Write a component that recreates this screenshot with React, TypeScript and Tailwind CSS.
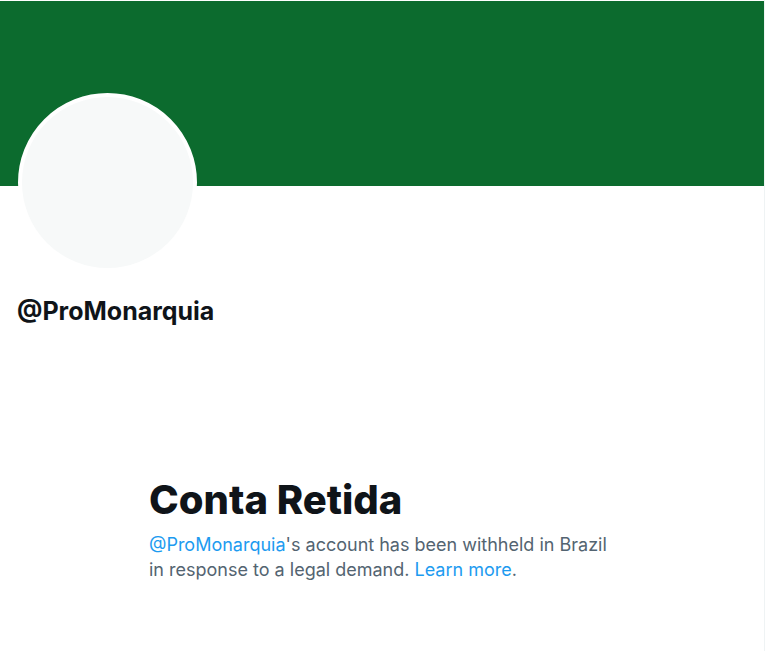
import React from "react";

export default function App() {
  return (
    <div className="w-[768px] h-[651px] bg-white overflow-hidden" style={{ fontFamily: "Inter, 'Liberation Sans', sans-serif" }}>
      <div className="w-[765px] h-full border-r border-[#eff3f4] pt-px">
        <div className="h-[185px] bg-[#0c6b2e]" />
        <div className="ml-[18px] -mt-[93px] w-[179px] h-[179px] rounded-full border-4 border-white bg-[#f7f9f9]" />
        <div className="ml-[17px] mt-[24px] text-[25px] leading-[30px] font-bold text-[#0f1419]">@ProMonarquia</div>
        <div className="ml-[149px] mt-[150px]">
          <div className="text-[40px] leading-[48px] font-extrabold text-[#0f1419]">Conta Retida</div>
          <div className="mt-[8px] w-[470px] text-[18px] leading-[25px] text-[#536471]">
            <span className="text-[#1d9bf0]">@ProMonarquia</span>'s account has been withheld in Brazil in response to a legal demand.{" "}
            <span className="text-[#1d9bf0]">Learn more</span>.
          </div>
        </div>
      </div>
    </div>
  );
}
